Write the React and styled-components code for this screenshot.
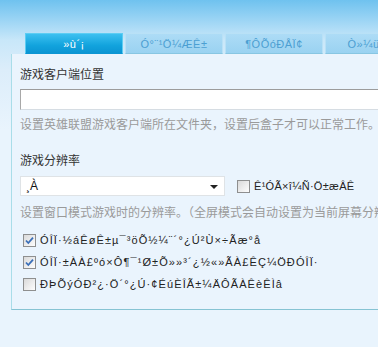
import React from 'react';
import styled, { createGlobalStyle } from 'styled-components';

const GlobalStyle = createGlobalStyle`
    html, body {
        margin: 0;
        padding: 0;
        width: 378px;
        height: 347px;
        overflow: hidden;
    }
    body {
        font-family: 'Liberation Sans', 'Noto Sans CJK SC', sans-serif;
        font-size: 12px;
        background: #e9f4fd;
    }
`;

const tabs = ['»ù´¡', 'Ó°¨¹Ö¼ÆÊ±', '¶ÔÕóÐÅÏ¢', 'Ò»¼ü°²×°'];

const options = [
    { label: 'ÓÎÏ·½áÊøÊ±µ¯³öÕ½¼¨´°¿Ú²Ù×÷Ãæ°å', checked: true },
    { label: 'ÓÎÏ·±ÀÀ£ºó×Ô¶¯¹Ø±Õ»»³´¿½«»ÃÀ£ÊÇ¼ÖÐÓÎÏ·', checked: true },
    { label: 'ÐÞÕýÓÐ²¿·Ö´°¿Ú·¢ÉúÈÎÃ±¼ÄÔÃÀÊèÊÌâ', checked: false },
];

function CheckIcon({ checked }) {
    return (
        <svg width="13" height="13" viewBox="0 0 13 13">
            <defs>
                <linearGradient id="cbg" x1="0" y1="0" x2="1" y2="1">
                    <stop offset="0" stopColor="#d8d8d8" />
                    <stop offset="1" stopColor="#ffffff" />
                </linearGradient>
            </defs>
            <rect x="0.5" y="0.5" width="12" height="12" fill="url(#cbg)" stroke="#8e8f8f" />
            {checked && (
                <path d="M3 6.5 L5.3 9 L10 3.6" fill="none" stroke="#3a6fb8" strokeWidth="1.8" />
            )}
        </svg>
    );
}

function App() {
    return (
        <>
            <GlobalStyle />
            <Page>
                <TabBar>
                    {tabs.map((t, i) => (
                        <Tab key={t} $active={i === 0}>{t}</Tab>
                    ))}
                </TabBar>
                <Panel>
                    <Label>游戏客户端位置</Label>
                    <PathInput />
                    <Hint>设置英雄联盟游戏客户端所在文件夹，设置后盒子才可以正常工作。</Hint>
                    <Label $top={18}>游戏分辨率</Label>
                    <SelectRow>
                        <Select>
                            <span>¸À</span>
                            <Arrow />
                        </Select>
                        <CheckLabel $inline>
                            <CheckIcon checked={false} />
                            <span>Ê¹ÓÃ×î¼Ñ·Ö±æÂÊ</span>
                        </CheckLabel>
                    </SelectRow>
                    <Hint $top={8}>设置窗口模式游戏时的分辨率。（全屏模式会自动设置为当前屏幕分辨率）</Hint>
                    <Options>
                        {options.map((o) => (
                            <CheckLabel key={o.label} $spacing={1.1}>
                                <CheckIcon checked={o.checked} />
                                <span>{o.label}</span>
                            </CheckLabel>
                        ))}
                    </Options>
                </Panel>
            </Page>
        </>
    );
}

export default App;

const Page = styled.div`
    height: 347px;
    padding-top: 33px;
    box-sizing: border-box;
    background: linear-gradient(#6fc2ef 0px, #a9daf6 26px, #c8e7f9 40px, #dcedfa 70px, #e9f4fd 130px);
`;

const TabBar = styled.div`
    display: flex;
    gap: 2px;
    padding-left: 25px;
    height: 21px;
    white-space: nowrap;
`;

const Tab = styled.div`
    flex: 0 0 98px;
    height: 21px;
    box-sizing: border-box;
    line-height: 20px;
    text-align: center;
    font-size: 11px;
    letter-spacing: 0.5px;
    color: ${(p) => (p.$active ? '#ffffff' : '#4c9fd2')};
    background: ${(p) => (p.$active
        ? 'linear-gradient(#3cc0f0, #12a3dd 60%, #0b95d3)'
        : 'linear-gradient(#addcf6, #9ad2f1)')};
    border: 1px solid ${(p) => (p.$active ? '#5ccdf3' : '#b9e1f6')};
    border-bottom: 1px solid ${(p) => (p.$active ? '#0b95d3' : '#88c6e2')};
`;

const Panel = styled.div`
    margin-left: 11px;
    width: 420px;
    height: 256px;
    box-sizing: border-box;
    padding: 12px 0 0 8px;
    background: #eaf4fd;
    border-left: 1px solid #a9dde9;
    border-bottom: 1px solid #86c3d3;
    color: #333333;
`;

const Label = styled.div`
    margin-top: ${(p) => p.$top || 0}px;
    line-height: 18px;
    font-size: 12px;
    color: #333333;
`;

const PathInput = styled.div`
    margin-top: 5px;
    height: 21px;
    box-sizing: border-box;
    background: #ffffff;
    border: 1px solid #d6dde3;
    border-top-color: #9c9c9c;
    border-left-color: #a8a8a8;
`;

const Hint = styled.div`
    margin-top: ${(p) => p.$top || 6}px;
    line-height: 18px;
    font-size: 12px;
    color: #9a9a9a;
    white-space: nowrap;
`;

const SelectRow = styled.div`
    display: flex;
    align-items: center;
    gap: 12px;
    margin-top: 6px;
`;

const Select = styled.div`
    position: relative;
    width: 205px;
    height: 20px;
    box-sizing: border-box;
    padding-left: 5px;
    display: flex;
    align-items: center;
    background: #ffffff;
    border: 1px solid #dfe3e6;
    color: #111111;
    font-size: 12px;
`;

const Arrow = styled.span`
    position: absolute;
    right: 6px;
    top: 8px;
    width: 0;
    height: 0;
    border-left: 4px solid transparent;
    border-right: 4px solid transparent;
    border-top: 4px solid #222222;
`;

const Options = styled.div`
    margin-top: 7px;
    display: flex;
    flex-direction: column;
    padding-left: 3px;
`;

const CheckLabel = styled.label`
    display: flex;
    align-items: center;
    gap: 4px;
    height: ${(p) => (p.$inline ? 20 : 22)}px;
    color: #222222;
    font-size: 11px;
    white-space: nowrap;
    letter-spacing: ${(p) => p.$spacing || 0.3}px;
`;
